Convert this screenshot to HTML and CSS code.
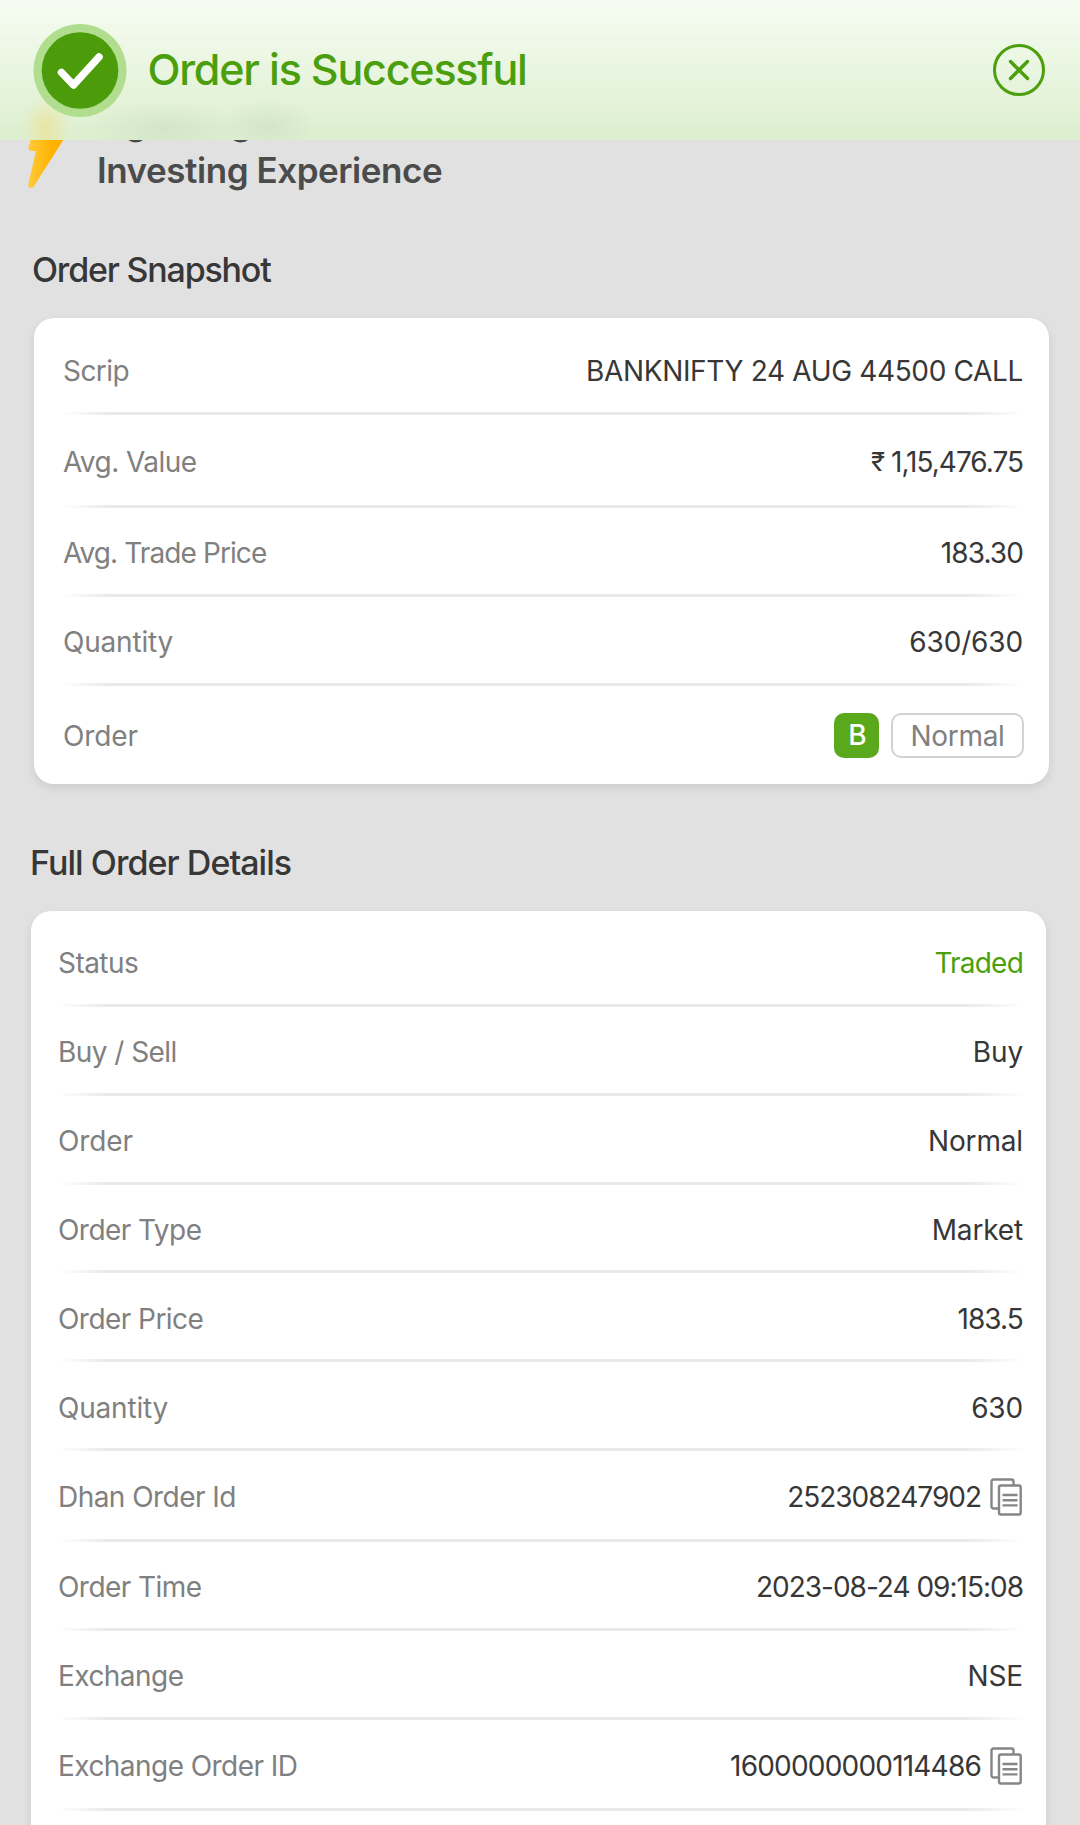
FILE: index.html
```html
<!DOCTYPE html>
<html lang="en">
<head>
    <meta charset="UTF-8">
    <meta name="viewport" content="width=device-width, initial-scale=1.0">
    <title>Order is Successful</title>
    <link rel="stylesheet" href="styles.css">
</head>
<body>
<header class="header">
    <svg class="check" viewBox="0 0 94 94">
        <circle cx="47" cy="47.500" r="46.5" fill="#b0de8e"/>
        <circle cx="47" cy="47.500" r="38.3" fill="#4b9b0a"/>
        <path d="M28.500 49.500 40.500 62 66 34" fill="none" stroke="#fff" stroke-width="7.5" stroke-linecap="round" stroke-linejoin="round"/>
    </svg>
    <h1 class="title">Order is Successful</h1>
    <svg class="close" viewBox="0 0 52 52">
        <circle cx="26" cy="26" r="24.5" fill="none" stroke="#4b9f0c" stroke-width="3"/>
        <path d="M17.500 17.500 34.500 34.500M34.500 17.500 17.500 34.500" stroke="#4b9f0c" stroke-width="3.4" stroke-linecap="round"/>
    </svg>
</header>

<main class="page">
    <div class="promo">
        <svg class="bolt" viewBox="0 0 40 94">
            <defs>
                <linearGradient id="bolt" x1="0" y1="0" x2="1" y2="0">
                    <stop offset="0" stop-color="#ffca3a"/>
                    <stop offset=".6" stop-color="#ffb300"/>
                </linearGradient>
            </defs>
            <path d="M12 12h17l-5 20h14q3 1 1.500 5L7 88q-2 3-4.500 1.500Q.8 88.500 1.500 85L9 53H4q-3-1-2.500-4Z" fill="url(#bolt)"/>
        </svg>
        <p class="promo-text">Lightning Fast<br>Investing Experience</p>
    </div>

    <h2 class="heading">Order Snapshot</h2>
    <section class="card snapshot">
        <div class="row first">
            <span class="label">Scrip</span>
            <span class="value scrip">BANKNIFTY 24 AUG 44500 CALL</span>
        </div>
        <div class="row tall">
            <span class="label">Avg. Value</span>
            <span class="value amount"><span class="rupee">₹</span> 1,15,476.75</span>
        </div>
        <div class="row">
            <span class="label trade-price">Avg. Trade Price</span>
            <span class="value price">183.30</span>
        </div>
        <div class="row">
            <span class="label quantity">Quantity</span>
            <span class="value">630/630</span>
        </div>
        <div class="row last">
            <span class="label order">Order</span>
            <span class="tags">
                <span class="tag buy">B</span>
                <span class="tag normal">Normal</span>
            </span>
        </div>
    </section>

    <h2 class="heading full">Full Order Details</h2>
    <section class="card details">
        <div class="row first">
            <span class="label">Status</span>
            <span class="value traded">Traded</span>
        </div>
        <div class="row">
            <span class="label">Buy / Sell</span>
            <span class="value">Buy</span>
        </div>
        <div class="row">
            <span class="label order">Order</span>
            <span class="value">Normal</span>
        </div>
        <div class="row">
            <span class="label">Order Type</span>
            <span class="value">Market</span>
        </div>
        <div class="row">
            <span class="label">Order Price</span>
            <span class="value price">183.5</span>
        </div>
        <div class="row">
            <span class="label quantity">Quantity</span>
            <span class="value">630</span>
        </div>
        <div class="row with-copy">
            <span class="label">Dhan Order Id</span>
            <span class="value digits">252308247902
                <svg class="copy" viewBox="0 0 32 38">
                    <path d="M8 30.500H3.500a2 2 0 0 1-2-2V3.500a2 2 0 0 1 2-2h18a2 2 0 0 1 2 2V7" fill="none" stroke="#868686" stroke-width="2.4"/>
                    <rect x="9" y="7.500" width="21.700" height="29" rx="2" fill="#fff" stroke="#868686" stroke-width="2.4"/>
                    <path d="M12.500 17h15M12.500 22.200h15M12.500 27.400h15" stroke="#868686" stroke-width="2.4"/>
                </svg>
            </span>
        </div>
        <div class="row">
            <span class="label">Order Time</span>
            <span class="value digits">2023-08-24 09:15:08</span>
        </div>
        <div class="row">
            <span class="label">Exchange</span>
            <span class="value">NSE</span>
        </div>
        <div class="row with-copy">
            <span class="label">Exchange Order ID</span>
            <span class="value exchange-id">1600000000114486
                <svg class="copy" viewBox="0 0 32 38">
                    <path d="M8 30.500H3.500a2 2 0 0 1-2-2V3.500a2 2 0 0 1 2-2h18a2 2 0 0 1 2 2V7" fill="none" stroke="#868686" stroke-width="2.4"/>
                    <rect x="9" y="7.500" width="21.700" height="29" rx="2" fill="#fff" stroke="#868686" stroke-width="2.4"/>
                    <path d="M12.500 17h15M12.500 22.200h15M12.500 27.400h15" stroke="#868686" stroke-width="2.4"/>
                </svg>
            </span>
        </div>
    </section>
</main>
</body>
</html>
```
FILE: styles.css
```css
* {
    box-sizing: border-box;
}

body {
    margin: 0;
    height: 1825px;
    overflow: hidden;
    background-color: #e1e1e1;
    font-family: Inter, "Liberation Sans", sans-serif;
    color: #373737;
}

.header {
    position: fixed;
    top: 0;
    left: 0;
    width: 100%;
    height: 140px;
    padding: 0 35px 0 32.5px;
    display: flex;
    align-items: center;
    background:
        radial-gradient(24px 34px at 46px 128px, rgba(240, 222, 130, 0.6), rgba(240, 222, 130, 0)),
        radial-gradient(80px 26px at 165px 128px, rgba(200, 218, 190, 0.5), rgba(200, 218, 190, 0)),
        radial-gradient(50px 26px at 268px 126px, rgba(200, 218, 190, 0.5), rgba(200, 218, 190, 0)),
        linear-gradient(#f6fcf2, #ddefcf);
    z-index: 1;
}

.check {
    width: 94px;
    height: 94px;
    overflow: visible;
}

.title {
    margin: 0 auto 2px 21px;
    font-size: 43px;
    font-weight: 550;
    letter-spacing: -1.2px;
    color: #4b9f0c;
}

.close {
    width: 52px;
    height: 52px;
}

.page {
    padding-top: 98px;
}

.promo {
    display: flex;
    height: 96px;
    padding-left: 27px;
    gap: 30px;
}

.bolt {
    width: 40px;
    height: 94px;
}

.promo-text {
    margin: 0;
    font-size: 35px;
    font-weight: 620;
    line-height: 48px;
    letter-spacing: -0.45px;
    color: #4b4b4b;
}

.heading {
    margin: 55px 0 27px 32px;
    font-size: 34px;
    font-weight: 550;
    line-height: 42px;
    letter-spacing: -1.2px;
}

.heading.full {
    margin: 58px 0 27px 30px;
    letter-spacing: -0.95px;
}

.card {
    background-color: #fff;
    border-radius: 20px;
    box-shadow: 0 4px 10px rgba(0, 0, 0, 0.09);
}

.snapshot {
    width: 1015px;
    margin-left: 34px;
    padding: 0 25px 0 29px;
}

.details {
    width: 1015px;
    height: 1000px;
    margin-left: 31px;
    padding: 0 22px 0 27px;
}

.row {
    display: flex;
    justify-content: space-between;
    align-items: center;
    height: 89px;
    padding: 3px 1px 3px 0;
    font-size: 28px;
    font-weight: 420;
    line-height: 36px;
    background: linear-gradient(to right, #fff, #e9e9e9 5%, #e9e9e9 94%, #fff) bottom / 100% 3px no-repeat;
}

.row.first {
    height: 96px;
    padding-top: 11px;
}

.snapshot .row.first {
    height: 97px;
    padding-top: 12px;
}

.row.tall {
    height: 93px;
}

.row.last {
    height: 98px;
    padding-top: 4px;
    background: none;
}

.details .row {
    height: 88.8px;
    padding-top: 5px;
}

.details .row.first {
    height: 96px;
    padding-top: 11px;
}

.details .row.with-copy {
    height: 91px;
}

.label {
    color: #808080;
    letter-spacing: -0.55px;
}

.label.trade-price {
    letter-spacing: -0.9px;
}

.label.quantity {
    letter-spacing: -0.2px;
}

.label.order {
    letter-spacing: -0.1px;
}

.value {
    display: flex;
    align-items: center;
    letter-spacing: -0.15px;
}

.scrip {
    letter-spacing: -0.35px;
}

.amount {
    letter-spacing: -1px;
    white-space: pre;
}

.rupee {
    font-size: 26px;
}

.price {
    letter-spacing: -0.9px;
}

.digits {
    letter-spacing: -1px;
}

.exchange-id {
    letter-spacing: -0.8px;
}

.traded {
    color: #4b9f0c;
    letter-spacing: -0.8px;
}

.copy {
    width: 32px;
    height: 38px;
    margin: 0 1px 0 9px;
}

.tags {
    display: flex;
    gap: 12px;
    margin-right: -1px;
}

.tag {
    height: 45px;
    line-height: 43px;
    border-radius: 10px;
    text-align: center;
}

.buy {
    width: 45px;
    padding-left: 2px;
    line-height: 45px;
    background-color: #5aa81c;
    color: #fff;
    font-weight: 500;
}

.normal {
    width: 133px;
    border: 2px solid #d2d2d2;
    color: #808080;
    line-height: 42px;
    letter-spacing: -0.3px;
}
```
